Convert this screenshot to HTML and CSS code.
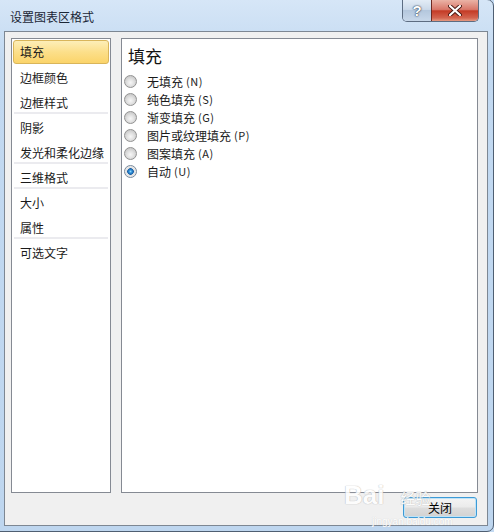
FILE: index.html
```html
<!DOCTYPE html>
<html lang="zh-CN">
<head>
  <meta charset="UTF-8">
  <title>设置图表区格式</title>
  <link rel="stylesheet" href="styles.css">
</head>
<body>
  <div class="window">
    <div class="titlebar">
      <span class="title">设置图表区格式</span>
      <div class="caption-buttons">
        <span class="btn-help">?</span>
        <span class="btn-close">
          <svg width="14" height="11" viewBox="0 0 14 11">
            <path d="M2 1 L12 10 M12 1 L2 10" stroke="#4a1a14" stroke-width="4" stroke-linecap="round"/>
            <path d="M2 1 L12 10 M12 1 L2 10" stroke="#fff" stroke-width="2.2" stroke-linecap="round"/>
          </svg>
        </span>
      </div>
    </div>

    <div class="client">
      <div class="panes">
        <ul class="nav">
          <li class="selected">填充</li>
          <li>边框颜色</li>
          <li class="group-end">边框样式</li>
          <li>阴影</li>
          <li class="group-end">发光和柔化边缘</li>
          <li class="group-end">三维格式</li>
          <li>大小</li>
          <li class="group-end">属性</li>
          <li>可选文字</li>
        </ul>

        <div class="content">
          <h2>填充</h2>
          <div class="option"><span class="radio"></span>无填充<span class="key">(N)</span></div>
          <div class="option"><span class="radio"></span>纯色填充<span class="key">(S)</span></div>
          <div class="option"><span class="radio"></span>渐变填充<span class="key">(G)</span></div>
          <div class="option"><span class="radio"></span>图片或纹理填充<span class="key">(P)</span></div>
          <div class="option"><span class="radio"></span>图案填充<span class="key">(A)</span></div>
          <div class="option"><span class="radio checked"></span>自动<span class="key">(U)</span></div>
        </div>
      </div>

      <div class="footer">
        <button class="close-btn">关闭</button>
      </div>
    </div>

    <!-- watermark from the screenshot -->
    <div class="watermark">
      <span class="wm-big">Bai</span><span class="wm-cn">经验</span>
    </div>
    <div class="watermark-url">jingyan.baidu.com</div>
  </div>
</body>
</html>
```

FILE: styles.css
```css
body {
  margin: 0;
  overflow: hidden;
  font-family: "Noto Sans CJK SC", "Liberation Sans", sans-serif;
  font-size: 12px;
  background-color: #c3daf2;
}

.window {
  position: relative;
  box-sizing: border-box;
  width: 495px;
  height: 533px;
  margin: -1px 0 0 -1px;
  border: 1px solid #4f5f72;
  border-radius: 0 7px 7px 0;
  background: linear-gradient(to bottom, #d6e6f7 0px, #c2d9f1 60px, #bed6ef 100%);
  padding: 0 5px 5px 5px;
  display: flex;
  flex-direction: column;
}

.titlebar {
  height: 31px;
  display: flex;
  justify-content: space-between;
  align-items: flex-start;
  margin-left: -1px;
}

.title {
  padding: 9px 0 0 6px;
  line-height: 15px;
  color: #1b2635;
}

.caption-buttons {
  display: flex;
  margin-right: 9px;
  border: 1px solid #5d6d82;
  border-top: none;
  border-radius: 0 0 5px 5px;
  overflow: hidden;
  height: 21px;
}

.btn-help {
  width: 28px;
  height: 21px;
  background: linear-gradient(to bottom, #e3ecf6 0%, #cbd9e9 45%, #b4c7dd 50%, #c8d8ea 100%);
  color: #fff;
  font: bold 15px "Liberation Sans", sans-serif;
  text-align: center;
  line-height: 21px;
  text-shadow: 0 0 2px #26374d, 0 0 1px #26374d;
  border-right: 1px solid #6e2a22;
}

.btn-close {
  width: 46px;
  height: 21px;
  background: linear-gradient(to bottom, #eab3a6 0%, #d9786a 45%, #c43b26 52%, #d3644f 85%, #e59a82 100%);
  display: flex;
  align-items: center;
  justify-content: center;
}

.client {
  flex: 1;
  margin-left: -1px;
  border: 1px solid #7d8793;
  background-color: #f0f0f0;
  padding: 6px 9px 6px 6px;
  display: flex;
  flex-direction: column;
}

.panes {
  display: flex;
  gap: 10px;
  height: 455px;
}

.nav {
  list-style: none;
  margin: 0;
  padding: 0;
  box-sizing: border-box;
  width: 100px;
  height: 455px;
  border: 1px solid #858a93;
  background-color: #fff;
}

.nav li {
  height: 25px;
  line-height: 22px;
  padding: 2px 0 0 6px;
  margin: 0 1px 0 1px;
  border: 1px solid transparent;
  border-bottom: none;
  box-sizing: border-box;
  color: #1a1a1a;
  white-space: nowrap;
}

.nav li.selected {
  margin-top: 1px;
  height: 24px;
  line-height: 22px;
  padding-top: 0;
  border: 1px solid #d9b55a;
  border-radius: 3px;
  background: linear-gradient(to bottom, #fdeeb8 0%, #fcdf8a 50%, #fbd46a 100%);
}

.nav li.group-end {
  box-shadow: inset 0 -2px 0 #ebebef;
}

.content {
  box-sizing: border-box;
  width: 357px;
  height: 455px;
  border: 1px solid #858a93;
  background-color: #fff;
  padding: 0 0 0 2px;
}

h2 {
  margin: 6px 0 5px 4px;
  font-size: 17px;
  font-weight: normal;
  line-height: 22px;
  color: #111;
}

.option {
  display: flex;
  align-items: center;
  height: 18px;
  color: #1a1a1a;
}

.key {
  margin-left: 3px;
  font-size: 11px;
  letter-spacing: 0.5px;
}

.radio {
  box-sizing: border-box;
  width: 13px;
  height: 13px;
  margin-right: 10px;
  border-radius: 50%;
  border: 1px solid #929292;
  background: radial-gradient(circle at 50% 60%, #f6f6f6 0, #e4e4e4 3px, #cdcdcd 6px);
}

.radio.checked {
  border-color: #7a8a9c;
  background: radial-gradient(circle at 50% 50%, #8fd8ff 0, #2f8fd6 1.5px, #1a5fa6 3px, #e0e0e0 3.6px, #eeeeee 6px);
}

.footer {
  display: flex;
  justify-content: flex-end;
  margin-top: 4px;
  padding-right: 1px;
}

.close-btn {
  width: 74px;
  height: 21px;
  padding: 0;
  font-family: "Noto Sans CJK SC", sans-serif;
  font-size: 12px;
  color: #000;
  border: 1px solid #3c9ad6;
  border-radius: 3px;
  background: linear-gradient(to bottom, #f4f4f4 0%, #ebebeb 48%, #dddddd 52%, #d2d2d2 100%);
  box-shadow: inset 0 0 0 1px #bfe3f7;
}

.watermark {
  position: absolute;
  left: 344px;
  top: 480px;
  color: #fff;
  text-shadow: 0 0 1px #b8b8b8, 0 0 1px #b8b8b8;
  opacity: 0.85;
  pointer-events: none;
}

.wm-big {
  font: bold 26px "Liberation Sans", sans-serif;
}

.wm-cn {
  font-size: 15px;
  margin-left: 16px;
}

.watermark-url {
  position: absolute;
  left: 372px;
  top: 516px;
  color: #fff;
  font: 10px "Liberation Sans", sans-serif;
  text-shadow: 0 0 1px #c4c4c4;
  pointer-events: none;
}
```
